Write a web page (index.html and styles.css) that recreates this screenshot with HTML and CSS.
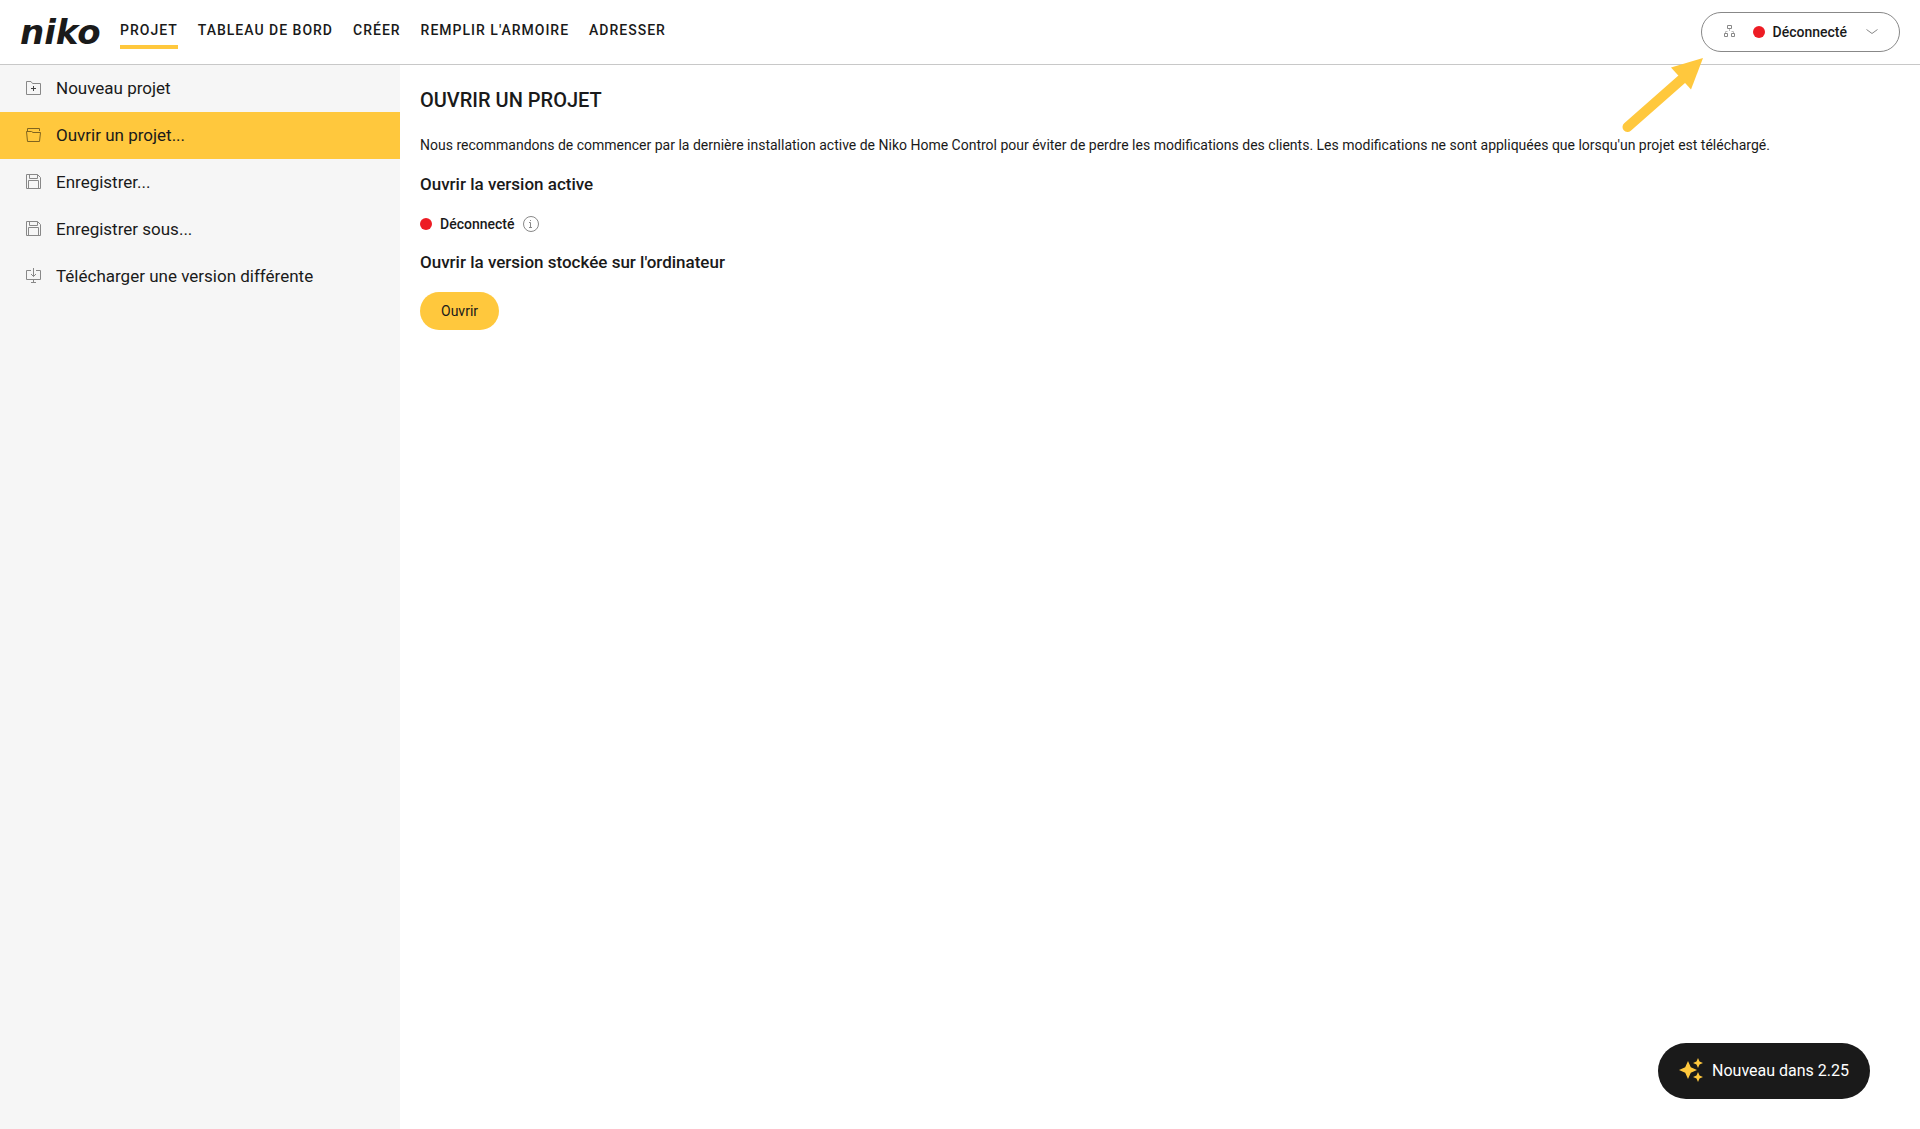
FILE: index.html
```html
<!DOCTYPE html>
<html lang="fr">
<head>
  <meta charset="UTF-8">
  <meta name="viewport" content="width=device-width, initial-scale=1.0">
  <title>Niko Home Control</title>
  <link rel="stylesheet" href="styles.css">
</head>
<body>
  <header class="header">
    <a class="logo" href="#">niko</a>
    <nav class="nav">
      <a class="active" href="#">PROJET</a>
      <a href="#">TABLEAU DE BORD</a>
      <a href="#">CRÉER</a>
      <a href="#">REMPLIR L'ARMOIRE</a>
      <a href="#">ADRESSER</a>
    </nav>
    <button type="button" class="connection">
      <svg class="icon-network" width="12" height="13" viewBox="0 0 12 13">
        <path d="M3.5 .5h4v3h-4zM.5 8.500h3v3h-3zM7.500 8.500h3v3h-3z"/>
        <path class="faint" d="M5.500 4v2M1.500 8V6.500h2M9.500 8V6.500h-2"/>
      </svg>
      <span class="dot"></span>
      <span>Déconnecté</span>
      <svg class="icon-chevron" width="12" height="6" viewBox="0 0 12 6">
        <path d="M.5 .5L6 4.500 11.500 .5"/>
      </svg>
    </button>
    <!-- Flèche vers l'état de connexion -->
    <svg class="arrow" width="84" height="76" viewBox="0 0 84 76">
      <path class="arrow-line" d="M7.500 69L62 21"/>
      <path class="arrow-head" d="M83 0L51 9.500 71 31.500z"/>
    </svg>
  </header>

  <div class="layout">
    <aside class="sidebar">
      <a href="#">
        <svg width="16" height="16" viewBox="0 0 16 16"><path d="M.5 14.500V1.500h4.500l1.500 2h8v11z"/><path class="dark" d="M7.500 6v5M5 8.500h5"/></svg>
        Nouveau projet
      </a>
      <a class="active" href="#">
        <svg width="16" height="16" viewBox="0 0 16 16"><path d="M1.500 4V1.500h12V4M1.500 14.500L.5 4.500h5l1.500 1h7.500l-1 9z"/></svg>
        Ouvrir un projet...
      </a>
      <a href="#">
        <svg width="16" height="16" viewBox="0 0 16 16"><path d="M.5 .5h11l3 3v11H.5zM3.500 .5v4h8v-4M2.500 14.500v-8h10v8"/></svg>
        Enregistrer...
      </a>
      <a href="#">
        <svg width="16" height="16" viewBox="0 0 16 16"><path d="M.5 .5h11l3 3v11H.5zM3.500 .5v4h8v-4M2.500 14.500v-8h10v8"/></svg>
        Enregistrer sous...
      </a>
      <a href="#">
        <svg width="16" height="16" viewBox="0 0 16 16"><path d="M5 2.500H.5v9h14v-9H10M7.500 0v8.500M5 6l2.500 2.500L10 6M7.500 11.500v3M5 14.500h5"/></svg>
        Télécharger une version différente
      </a>
    </aside>

    <main class="content">
      <h1>OUVRIR UN PROJET</h1>
      <p>Nous recommandons de commencer par la dernière installation active de Niko Home Control pour éviter de perdre les modifications des clients. Les modifications ne sont appliquées que lorsqu'un projet est téléchargé.</p>
      <h2>Ouvrir la version active</h2>
      <div class="status">
        <span class="dot"></span>
        <span>Déconnecté</span>
        <svg class="icon-info" width="16" height="16" viewBox="0 0 16 16">
          <circle cx="8" cy="8" r="7.500"/>
          <path d="M7.500 4v1M6 6.500h1.500v5M6 11.500h3"/>
        </svg>
      </div>
      <h2>Ouvrir la version stockée sur l'ordinateur</h2>
      <button type="button" class="btn-open">Ouvrir</button>
    </main>
  </div>

  <button type="button" class="whats-new">
    <svg width="24" height="24" viewBox="0 0 24 24">
      <path d="M9 3l2.800 6.200L18 12l-6.200 2.800L9 21l-2.800-6.200L0 12l6.200-2.800zM19 0l1.500 3.500L24 5l-3.500 1.500L19 10l-1.500-3.500L14 5l3.500-1.500zM19 14l1.500 3.500L24 19l-3.500 1.500L19 24l-1.500-3.500L14 19l3.500-1.500z"/>
    </svg>
    Nouveau dans 2.25
  </button>
</body>
</html>
```

FILE: styles.css
```css
* {
  box-sizing: border-box;
}
body {
  margin: 0;
  min-height: 100vh;
  display: flex;
  flex-direction: column;
  font-family: Roboto, Arial, sans-serif;
  font-size: 14px;
  color: #1a1a1a;
  background-color: #fff;
}
a {
  color: inherit;
  text-decoration: none;
}
button {
  font-family: inherit;
  color: inherit;
  cursor: pointer;
}
svg {
  flex: none;
  fill: none;
  stroke: #888;
}

/* Header */
.header {
  position: relative;
  display: flex;
  align-items: center;
  height: 65px;
  padding: 0 20px;
  border-bottom: 1px solid #c8c8c8;
}
.logo {
  width: 100px;
  font: italic bold 34px/40px "DejaVu Sans", sans-serif;
}
.nav {
  display: flex;
  gap: 20px;
}
.nav a {
  padding: 6px 0 7px;
  border-bottom: 4px solid transparent;
  line-height: 16px;
  font-weight: 500;
  letter-spacing: 1px;
}
.nav a.active {
  border-color: #ffc83d;
}
.connection {
  display: flex;
  align-items: center;
  height: 40px;
  margin-left: auto;
  padding: 0 21px 1px 22px;
  border: 1px solid #888;
  border-radius: 20px;
  background: #fff;
  font-size: 14px;
  line-height: 18px;
  font-weight: 500;
}
.dot {
  width: 12px;
  height: 12px;
  margin-right: 8px;
  border-radius: 50%;
  background-color: #ed1c24;
}
.icon-network {
  margin-right: 17px;
}
.icon-network .faint {
  stroke: #bbb;
}
.icon-chevron {
  margin-left: 19px;
}
.arrow {
  position: absolute;
  top: 58px;
  right: 216px;
}
.arrow-line {
  stroke: #ffc83d;
  stroke-width: 10;
  stroke-linecap: round;
}
.arrow-head {
  fill: #ffc83d;
  stroke: none;
}

/* Page */
.layout {
  flex: 1;
  display: flex;
}
.sidebar {
  flex: none;
  width: 400px;
  background-color: #f6f6f6;
}
.sidebar a {
  display: flex;
  align-items: center;
  gap: 14px;
  height: 47px;
  padding: 0 26px 2px;
  font-size: 17px;
}
.sidebar a.active {
  background-color: #ffc83d;
}
.sidebar a.active svg {
  stroke: #80641f;
}
.sidebar .dark {
  stroke: #444;
}
.content {
  flex: 1;
  padding: 22px 20px;
}
h1 {
  margin: 0 0 20px;
  font-size: 20px;
  line-height: 26px;
  font-weight: 500;
}
p {
  margin: 0 0 15px;
  line-height: 24px;
}
h2 {
  margin: 0 0 16px;
  font-size: 17px;
  line-height: 24px;
  font-weight: 500;
}
.status {
  display: flex;
  align-items: center;
  height: 24px;
  margin-bottom: 14px;
  font-weight: 500;
}
.icon-info {
  margin-left: 9px;
}
.btn-open {
  height: 38px;
  margin-top: 2px;
  padding: 0 21px 1px;
  border: 0;
  border-radius: 19px;
  background-color: #ffc83d;
  font-size: 14px;
}

/* Floating button */
.whats-new {
  position: fixed;
  right: 50px;
  bottom: 30px;
  display: flex;
  align-items: center;
  gap: 9px;
  height: 56px;
  padding: 0 21px 2px;
  border: 0;
  border-radius: 28px;
  background-color: #1a1a1a;
  color: #fff;
  font-size: 16px;
}
.whats-new svg {
  fill: #ffc83d;
  stroke: none;
}
```
